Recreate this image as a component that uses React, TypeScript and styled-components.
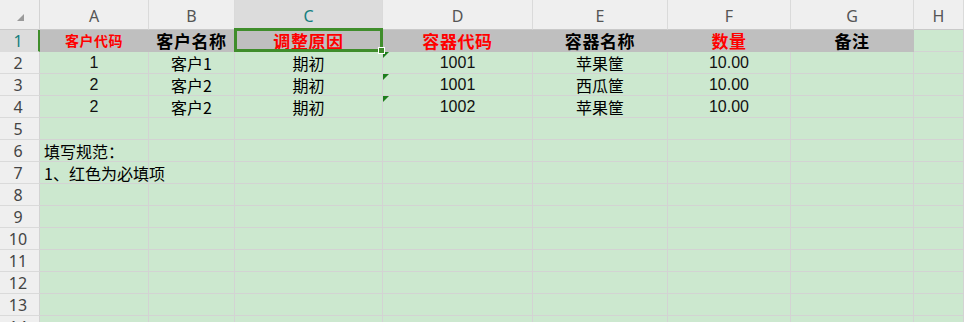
import React from 'react';
import styled, { createGlobalStyle, css } from 'styled-components';

const GRID = '#d3d3d3';
const EYE_GREEN = '#cce8cf';
const HEAD_BG = '#efefef';
const HEAD_ACTIVE = '#dcdcdc';
const SELECT = '#3f8d2b';

const GlobalStyle = createGlobalStyle`
  html, body {
    margin: 0;
    padding: 0;
    overflow: hidden;
    background: ${EYE_GREEN};
  }
`;

const Sheet = styled.div`
  display: grid;
  grid-template-columns: 40px 109px 86px 148px 150px 135px 123px 123px 1fr;
  grid-template-rows: 30px;
  grid-auto-rows: 22px;
  width: 964px;
  height: 322px;
  overflow: hidden;
  font-family: 'Noto Sans CJK SC', 'Noto Sans', sans-serif;
  line-height: 1;
`;

const Corner = styled.div`
  box-sizing: border-box;
  background: ${HEAD_BG};
  border-right: 1px solid ${GRID};
  border-bottom: 1px solid #c9c9c9;
  position: relative;

  &::after {
    content: '';
    position: absolute;
    left: 17px;
    top: 14px;
    width: 0;
    height: 0;
    border-left: 7px solid transparent;
    border-bottom: 7px solid #9a9a9a;
  }
`;

const ColHead = styled.div<{ $active?: boolean }>`
  box-sizing: border-box;
  display: flex;
  align-items: center;
  justify-content: center;
  padding-top: 2px;
  background: ${(p) => (p.$active ? HEAD_ACTIVE : HEAD_BG)};
  border-right: 1px solid #dadada;
  border-bottom: 1px solid #c9c9c9;
  color: ${(p) => (p.$active ? '#167f7f' : '#555')};
  font-family: 'Noto Sans', sans-serif;
  font-size: 16px;
`;

const RowHead = styled.div<{ $active?: boolean }>`
  box-sizing: border-box;
  display: flex;
  align-items: center;
  justify-content: center;
  background: ${(p) => (p.$active ? HEAD_ACTIVE : HEAD_BG)};
  border-right: ${(p) => (p.$active ? `2px solid ${SELECT}` : `1px solid ${GRID}`)};
  border-bottom: 1px solid ${(p) => (p.$active ? HEAD_ACTIVE : '#dadada')};
  color: ${(p) => (p.$active ? '#167f7f' : '#444')};
  font-family: 'Noto Sans', sans-serif;
  font-size: 16px;
  padding-right: ${(p) => (p.$active ? '2px' : '3px')};
`;

type Tone = 'red' | 'black';

const Cell = styled.div<{
  $title?: boolean;
  $tone?: Tone;
  $small?: boolean;
  $num?: boolean;
  $left?: boolean;
}>`
  box-sizing: border-box;
  position: relative;
  display: flex;
  align-items: center;
  justify-content: ${(p) => (p.$left ? 'flex-start' : 'center')};
  padding-left: ${(p) => (p.$left ? '4px' : '0')};
  white-space: nowrap;
  background: ${EYE_GREEN};
  border-right: 1px solid ${GRID};
  border-bottom: 1px solid ${GRID};
  color: #000;
  font-size: 16px;

  ${(p) =>
    p.$title &&
    css`
      background: #bfbfbf;
      border-color: #bfbfbf;
      font-weight: 700;
      font-size: ${p.$small ? '14px' : '17px'};
      letter-spacing: ${p.$small ? '0.5px' : '0.6px'};
      align-items: ${p.$small ? 'flex-start' : 'center'};
      padding-top: ${p.$small ? '3px' : '0'};
      color: ${p.$tone === 'red' ? '#ff0000' : '#000'};
    `}

  ${(p) =>
    p.$num &&
    css`
      font-family: 'Liberation Sans', sans-serif;
      font-size: 16px;
      color: #111;
    `}

  ${(p) =>
    p.$left &&
    css`
      z-index: 1;
      overflow: visible;
    `}
`;

/* green 3px frame around the active cell, with its fill handle */
const Selection = styled.div`
  position: absolute;
  left: -1px;
  top: -2px;
  right: -1px;
  bottom: -1px;
  border: 3px solid ${SELECT};
  z-index: 3;
  pointer-events: none;

  &::after {
    content: '';
    position: absolute;
    right: -5px;
    bottom: -5px;
    width: 5px;
    height: 5px;
    background: ${SELECT};
    border: 1px solid #fff;
  }
`;

/* number-stored-as-text marker */
const TextFlag = styled.span`
  position: absolute;
  left: 0;
  top: 0;
  width: 0;
  height: 0;
  border-top: 6px solid #1d7d1d;
  border-right: 6px solid transparent;
`;

const columns = ['A', 'B', 'C', 'D', 'E', 'F', 'G', 'H'];

const titles: { text: string; tone: Tone; small?: boolean }[] = [
  { text: '客户代码', tone: 'red', small: true },
  { text: '客户名称', tone: 'black' },
  { text: '调整原因', tone: 'red' },
  { text: '容器代码', tone: 'red' },
  { text: '容器名称', tone: 'black' },
  { text: '数量', tone: 'red' },
  { text: '备注', tone: 'black' },
];

const records = [
  { code: '1', name: '客户1', reason: '期初', box: '1001', boxName: '苹果筐', qty: '10.00' },
  { code: '2', name: '客户2', reason: '期初', box: '1001', boxName: '西瓜筐', qty: '10.00' },
  { code: '2', name: '客户2', reason: '期初', box: '1002', boxName: '苹果筐', qty: '10.00' },
];

const notes: Record<number, string> = {
  6: '填写规范：',
  7: '1、红色为必填项',
};

export default function App() {
  const blankRows = Array.from({ length: 14 - 4 }, (_, i) => i + 5);

  return (
    <>
      <GlobalStyle />
      <Sheet>
        <Corner />
        {columns.map((c) => (
          <ColHead key={c} $active={c === 'C'}>
            {c}
          </ColHead>
        ))}

        <RowHead $active>1</RowHead>
        {titles.map((t, i) => (
          <Cell key={t.text} $title $tone={t.tone} $small={t.small}>
            {t.text}
            {i === 2 && <Selection />}
          </Cell>
        ))}
        <Cell />

        {records.map((r, i) => (
          <React.Fragment key={i}>
            <RowHead>{i + 2}</RowHead>
            <Cell $num>{r.code}</Cell>
            <Cell>{r.name}</Cell>
            <Cell>{r.reason}</Cell>
            <Cell $num>
              <TextFlag />
              {r.box}
            </Cell>
            <Cell>{r.boxName}</Cell>
            <Cell $num>{r.qty}</Cell>
            <Cell />
            <Cell />
          </React.Fragment>
        ))}

        {blankRows.map((n) => (
          <React.Fragment key={n}>
            <RowHead>{n}</RowHead>
            {notes[n] ? <Cell $left>{notes[n]}</Cell> : <Cell />}
            {columns.slice(1).map((c) => (
              <Cell key={c} />
            ))}
          </React.Fragment>
        ))}
      </Sheet>
    </>
  );
}
